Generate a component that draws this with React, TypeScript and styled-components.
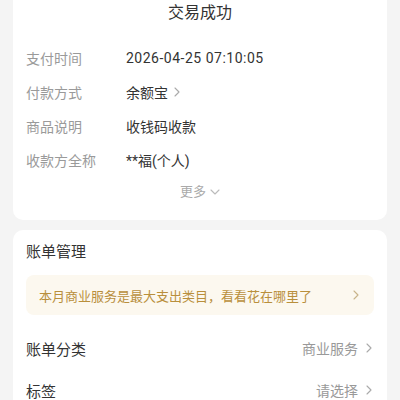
import React, { FC } from 'react'
import styled, { createGlobalStyle } from 'styled-components'

const GlobalStyle = createGlobalStyle`
  body {
    margin: 0;
    background: #f4f4f4;
    font-family: Roboto, "Noto Sans CJK SC", sans-serif;
  }
`

const Page = styled.div`
  width: 400px;
  height: 400px;
  overflow: hidden;
  padding: 0 13px;
  box-sizing: border-box;
  display: flex;
  flex-direction: column;
  gap: 10px;
`

const Card = styled.div<{ $top?: boolean }>`
  background: #fff;
  border-radius: ${p => (p.$top ? '0 0 10px 10px' : '10px')};
  padding: ${p => (p.$top ? '0 13px 18px' : '12px 13px 0')};
`

const Status = styled.div`
  text-align: center;
  font-size: 16px;
  color: #333;
  line-height: 22px;
  margin-top: 2px;
`

const InfoList = styled.div`
  margin-top: 17px;
  display: flex;
  flex-direction: column;
`

const InfoRow = styled.div`
  display: flex;
  align-items: center;
  height: 34px;
  font-size: 14px;
`

const Label = styled.span`
  width: 100px;
  color: #9a9a9a;
`

const Value = styled.span<{ $spaced?: boolean }>`
  color: #333;
  display: flex;
  align-items: center;
  gap: 4px;
  letter-spacing: ${p => (p.$spaced ? '0.5px' : 'normal')};
`

const More = styled.div`
  margin-top: 5px;
  display: flex;
  justify-content: center;
  align-items: center;
  gap: 4px;
  font-size: 13px;
  color: #aaa;
  line-height: 20px;
`

const SectionTitle = styled.div`
  font-size: 15px;
  color: #333;
  line-height: 20px;
`

const Banner = styled.div`
  margin-top: 13px;
  height: 40px;
  border-radius: 8px;
  background: #fcf8ef;
  display: flex;
  align-items: center;
  justify-content: space-between;
  padding: 0 13px;
  font-size: 13px;
  color: #b98f3c;
`

const ManageRow = styled.div`
  display: flex;
  justify-content: space-between;
  align-items: center;
  height: 42px;
  font-size: 15px;
  color: #333;
`

const FirstRow = styled(ManageRow)`
  margin-top: 12px;
`

const RowValue = styled.span`
  display: flex;
  align-items: center;
  gap: 6px;
  font-size: 14px;
  color: #999;
`

const Chevron: FC<{ dir?: 'right' | 'down'; color?: string; size?: number }> = ({
  dir = 'right',
  color = '#aaa',
  size = 10,
}) => (
  <svg width={size} height={size} viewBox="0 0 10 10" fill="none">
    {dir === 'right' ? (
      <path d="M3 1l4 4-4 4" stroke={color} strokeWidth="1.1" strokeLinecap="round" strokeLinejoin="round" />
    ) : (
      <path d="M1 3l4 4 4-4" stroke={color} strokeWidth="1.1" strokeLinecap="round" strokeLinejoin="round" />
    )}
  </svg>
)

const App: FC = () => {
  return (
    <Page>
      <GlobalStyle />
      <Card $top>
        <Status>交易成功</Status>
        <InfoList>
          <InfoRow>
            <Label>支付时间</Label>
            <Value $spaced>2026-04-25 07:10:05</Value>
          </InfoRow>
          <InfoRow>
            <Label>付款方式</Label>
            <Value>
              余额宝 <Chevron />
            </Value>
          </InfoRow>
          <InfoRow>
            <Label>商品说明</Label>
            <Value>收钱码收款</Value>
          </InfoRow>
          <InfoRow>
            <Label>收款方全称</Label>
            <Value>**福(个人)</Value>
          </InfoRow>
        </InfoList>
        <More>
          更多 <Chevron dir="down" color="#bbb" />
        </More>
      </Card>
      <Card>
        <SectionTitle>账单管理</SectionTitle>
        <Banner>
          <span>本月商业服务是最大支出类目，看看花在哪里了</span>
          <Chevron color="#c9b48a" />
        </Banner>
        <FirstRow>
          <span>账单分类</span>
          <RowValue>
            商业服务 <Chevron />
          </RowValue>
        </FirstRow>
        <ManageRow>
          <span>标签</span>
          <RowValue>
            请选择 <Chevron />
          </RowValue>
        </ManageRow>
      </Card>
    </Page>
  )
}

export default App
